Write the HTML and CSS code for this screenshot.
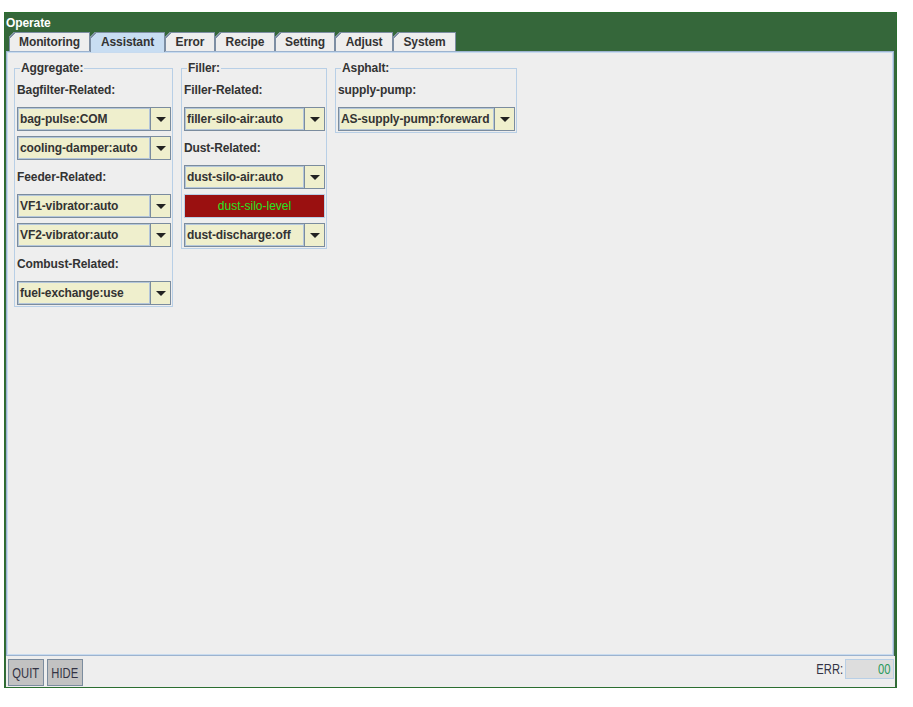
FILE: index.html
```html
<!DOCTYPE html>
<html>
<head>
<meta charset="utf-8">
<link rel="stylesheet" href="styles.css">
</head>
<body>
<div class="window">
  <div class="title">Operate</div>
  <div class="tabs">
    <div class="tab w-mon">Monitoring</div>
    <div class="tab w-ass selected">Assistant</div>
    <div class="tab w-err">Error</div>
    <div class="tab w-rec">Recipe</div>
    <div class="tab w-set">Setting</div>
    <div class="tab w-adj">Adjust</div>
    <div class="tab w-sys">System</div>
  </div>
  <div class="panel">
    <fieldset class="group g-agg">
      <legend>Aggregate:</legend>
      <div class="label">Bagfilter-Related:</div>
      <div class="combo"><span class="field">bag-pulse:COM</span><span class="arrow"></span></div>
      <div class="combo"><span class="field">cooling-damper:auto</span><span class="arrow"></span></div>
      <div class="label">Feeder-Related:</div>
      <div class="combo"><span class="field">VF1-vibrator:auto</span><span class="arrow"></span></div>
      <div class="combo"><span class="field">VF2-vibrator:auto</span><span class="arrow"></span></div>
      <div class="label">Combust-Related:</div>
      <div class="combo"><span class="field">fuel-exchange:use</span><span class="arrow"></span></div>
    </fieldset>
    <fieldset class="group g-fil">
      <legend>Filler:</legend>
      <div class="label">Filler-Related:</div>
      <div class="combo"><span class="field">filler-silo-air:auto</span><span class="arrow"></span></div>
      <div class="label">Dust-Related:</div>
      <div class="combo"><span class="field">dust-silo-air:auto</span><span class="arrow"></span></div>
      <div class="alarm">dust-silo-level</div>
      <div class="combo"><span class="field">dust-discharge:off</span><span class="arrow"></span></div>
    </fieldset>
    <fieldset class="group g-asp">
      <legend>Asphalt:</legend>
      <div class="label">supply-pump:</div>
      <div class="combo"><span class="field">AS-supply-pump:foreward</span><span class="arrow"></span></div>
    </fieldset>
  </div>
  <div class="bottombar">
    <div class="btn w-quit"><span class="narrow">QUIT</span></div>
    <div class="btn w-hide"><span class="narrow">HIDE</span></div>
    <div class="spacer"></div>
    <div class="errlabel"><span class="narrow">ERR:</span></div>
    <div class="errbox"><span class="narrow">00</span></div>
  </div>
</div>
</body>
</html>
```
FILE: styles.css
```css
html, body {
  margin: 0;
  padding: 0;
  background: #ffffff;
}
body {
  font-family: "Liberation Sans", Arial, sans-serif;
  font-size: 12px;
}
.window {
  margin: 12px 0 0 4px;
  width: 893px;
  height: 676px;
  box-sizing: border-box;
  border: 1px solid #2b6e30;
  background: #35673a;
  padding: 0 1px;
  display: flex;
  flex-direction: column;
}
.title {
  height: 19px;
  line-height: 20px;
  color: #ffffff;
  font-weight: bold;
  font-size: 12px;
  letter-spacing: -0.1px;
}
.tabs {
  height: 19px;
  display: flex;
  align-items: flex-end;
  padding-left: 3px;
  position: relative;
  z-index: 2;
}
.tab {
  height: 19px;
  box-sizing: border-box;
  border: 1px solid #7d8ea3;
  border-bottom: none;
  background-color: #eeeeee;
  background-image: linear-gradient(135deg, #7d8ea3 0, #7d8ea3 4.2px, transparent 4.2px);
  clip-path: polygon(5px 0, 100% 0, 100% 100%, 0 100%, 0 5px);
  color: #333333;
  font-weight: bold;
  font-size: 12px;
  letter-spacing: -0.1px;
  line-height: 18px;
  text-align: center;
}
.tab.selected {
  background-color: #c8ddf2;
  height: 20px;
  margin-bottom: -1px;
}
.w-mon { width: 81px; }
.w-ass { width: 75px; }
.w-err { width: 50px; }
.w-rec { width: 60px; }
.w-set { width: 60px; }
.w-adj { width: 58px; }
.w-sys { width: 63px; }

.panel {
  flex: 1;
  box-sizing: border-box;
  background: #eeeeee;
  border: 1px solid #9cb3cf;
  box-shadow: inset 0 0 0 1px #c8dbef;
  margin-right: 1px;
  padding: 9px 0 0 7px;
  display: flex;
  align-items: flex-start;
  gap: 8px;
}
.group {
  margin: 0;
  padding: 3px 1px 1px 2px;
  border: 1px solid #b8cfe6;
  display: grid;
  grid-auto-rows: 24px;
  row-gap: 5px;
  box-sizing: border-box;
}
.group legend {
  font-weight: bold;
  font-size: 12px;
  letter-spacing: -0.1px;
  line-height: 14px;
  color: #333333;
  padding: 0 1px;
  margin-left: 3px;
}
.g-agg { width: 159px; }
.g-fil { width: 146px; }
.g-asp { width: 182px; }

.label {
  font-weight: bold;
  letter-spacing: -0.1px;
  color: #333333;
  line-height: 24px;
  white-space: nowrap;
}
.combo {
  display: flex;
  height: 24px;
}
.field {
  flex: 1;
  box-sizing: border-box;
  height: 24px;
  border: 1px solid #7b8c9e;
  box-shadow: inset 0 0 0 1px #b4c6da;
  background: #efefcd;
  color: #333333;
  font-weight: bold;
  letter-spacing: -0.1px;
  line-height: 22px;
  padding-left: 2px;
  white-space: nowrap;
  overflow: hidden;
}
.arrow {
  width: 20px;
  height: 24px;
  box-sizing: border-box;
  border: 1px solid #7b8c9e;
  border-left: none;
  background: #efefcd;
  display: flex;
  align-items: center;
  justify-content: center;
}
.arrow::after {
  content: "";
  width: 0;
  height: 0;
  border-left: 5px solid transparent;
  border-right: 5px solid transparent;
  border-top: 5px solid #222222;
}
.alarm {
  box-sizing: border-box;
  height: 24px;
  border: 1px solid #b8cfe6;
  background: #9a1010;
  color: #22e622;
  text-align: center;
  line-height: 22px;
  font-size: 12px;
}

.bottombar {
  height: 31px;
  box-sizing: border-box;
  background: #eeeeee;
  display: flex;
  align-items: flex-start;
  padding: 3px 1px 0 2px;
  gap: 3px;
}
.btn {
  height: 27px;
  box-sizing: border-box;
  border: 1px solid #7b8c9e;
  background: #c2c2c2;
  color: #333344;
  display: flex;
  align-items: center;
  justify-content: center;
  overflow: hidden;
}
.w-quit { width: 36px; }
.w-hide { width: 36px; }
.narrow {
  display: inline-block;
  font-size: 14px;
  transform: scaleX(0.8);
}
.spacer { flex: 1; }
.errlabel {
  height: 20px;
  line-height: 20px;
  color: #333344;
  width: 27px;
  display: flex;
  justify-content: center;
  margin-right: -1px;
}
.errbox {
  width: 49px;
  height: 20px;
  box-sizing: border-box;
  border: 1px solid #b8cfe6;
  background: #dddddd;
  color: #2a9a5a;
  line-height: 18px;
  display: flex;
  justify-content: flex-end;
  padding-right: 2px;
}
.errbox .narrow {
  transform-origin: right center;
}
```
